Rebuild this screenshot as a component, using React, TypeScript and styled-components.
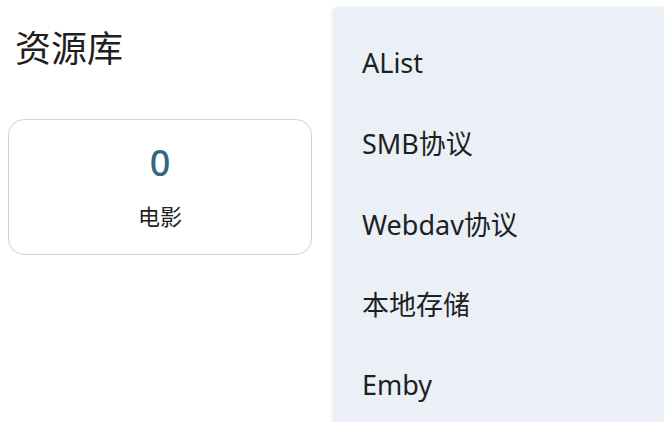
import React from "react";
import styled, { createGlobalStyle } from "styled-components";

const GlobalStyle = createGlobalStyle`
  html, body {
    margin: 0;
    padding: 0;
    background: #ffffff;
    font-family: "Noto Sans", "Noto Sans CJK SC", sans-serif;
    color: #222;
  }
`;

const Page = styled.div`
  width: 664px;
  height: 422px;
  position: relative;
  overflow: hidden;
  background: #ffffff;
`;

const Library = styled.section`
  width: 320px;
  padding: 25px 0 0 8px;
  box-sizing: border-box;
`;

const Title = styled.h1`
  margin: 0 0 0 7px;
  font-size: 36px;
  font-weight: 400;
  line-height: 48px;
  color: #1f1f1f;
`;

const StatCard = styled.div`
  margin-top: 46px;
  width: 304px;
  height: 136px;
  box-sizing: border-box;
  border: 1.5px solid #d2d2d2;
  border-radius: 16px;
  display: flex;
  flex-direction: column;
  align-items: center;
  padding-top: 19px;
`;

const StatValue = styled.div`
  font-size: 36px;
  line-height: 48px;
  color: #2f6880;
  font-weight: 500;
`;

const StatLabel = styled.div`
  margin-top: 13px;
  font-size: 22px;
  line-height: 32px;
  color: #222;
`;

const Menu = styled.ul`
  position: absolute;
  left: 333px;
  top: 7px;
  width: 340px;
  height: 430px;
  margin: 0;
  padding: 15px 0 0;
  list-style: none;
  background: #ebf0f7;
  border-top-left-radius: 6px;
  box-shadow: -1px 0 4px rgba(0, 0, 0, 0.08);
  box-sizing: border-box;
`;

const MenuItem = styled.li`
  height: 80.5px;
  display: flex;
  align-items: center;
  padding-left: 29px;
  font-size: 27px;
  color: #1d1f22;
`;

const items = ["AList", "SMB协议", "Webdav协议", "本地存储", "Emby"];

export default function App() {
  return (
    <Page>
      <GlobalStyle />
      <Library>
        <Title>资源库</Title>
        <StatCard>
          <StatValue>0</StatValue>
          <StatLabel>电影</StatLabel>
        </StatCard>
      </Library>
      <Menu>
        {items.map((item) => (
          <MenuItem key={item}>{item}</MenuItem>
        ))}
      </Menu>
    </Page>
  );
}
